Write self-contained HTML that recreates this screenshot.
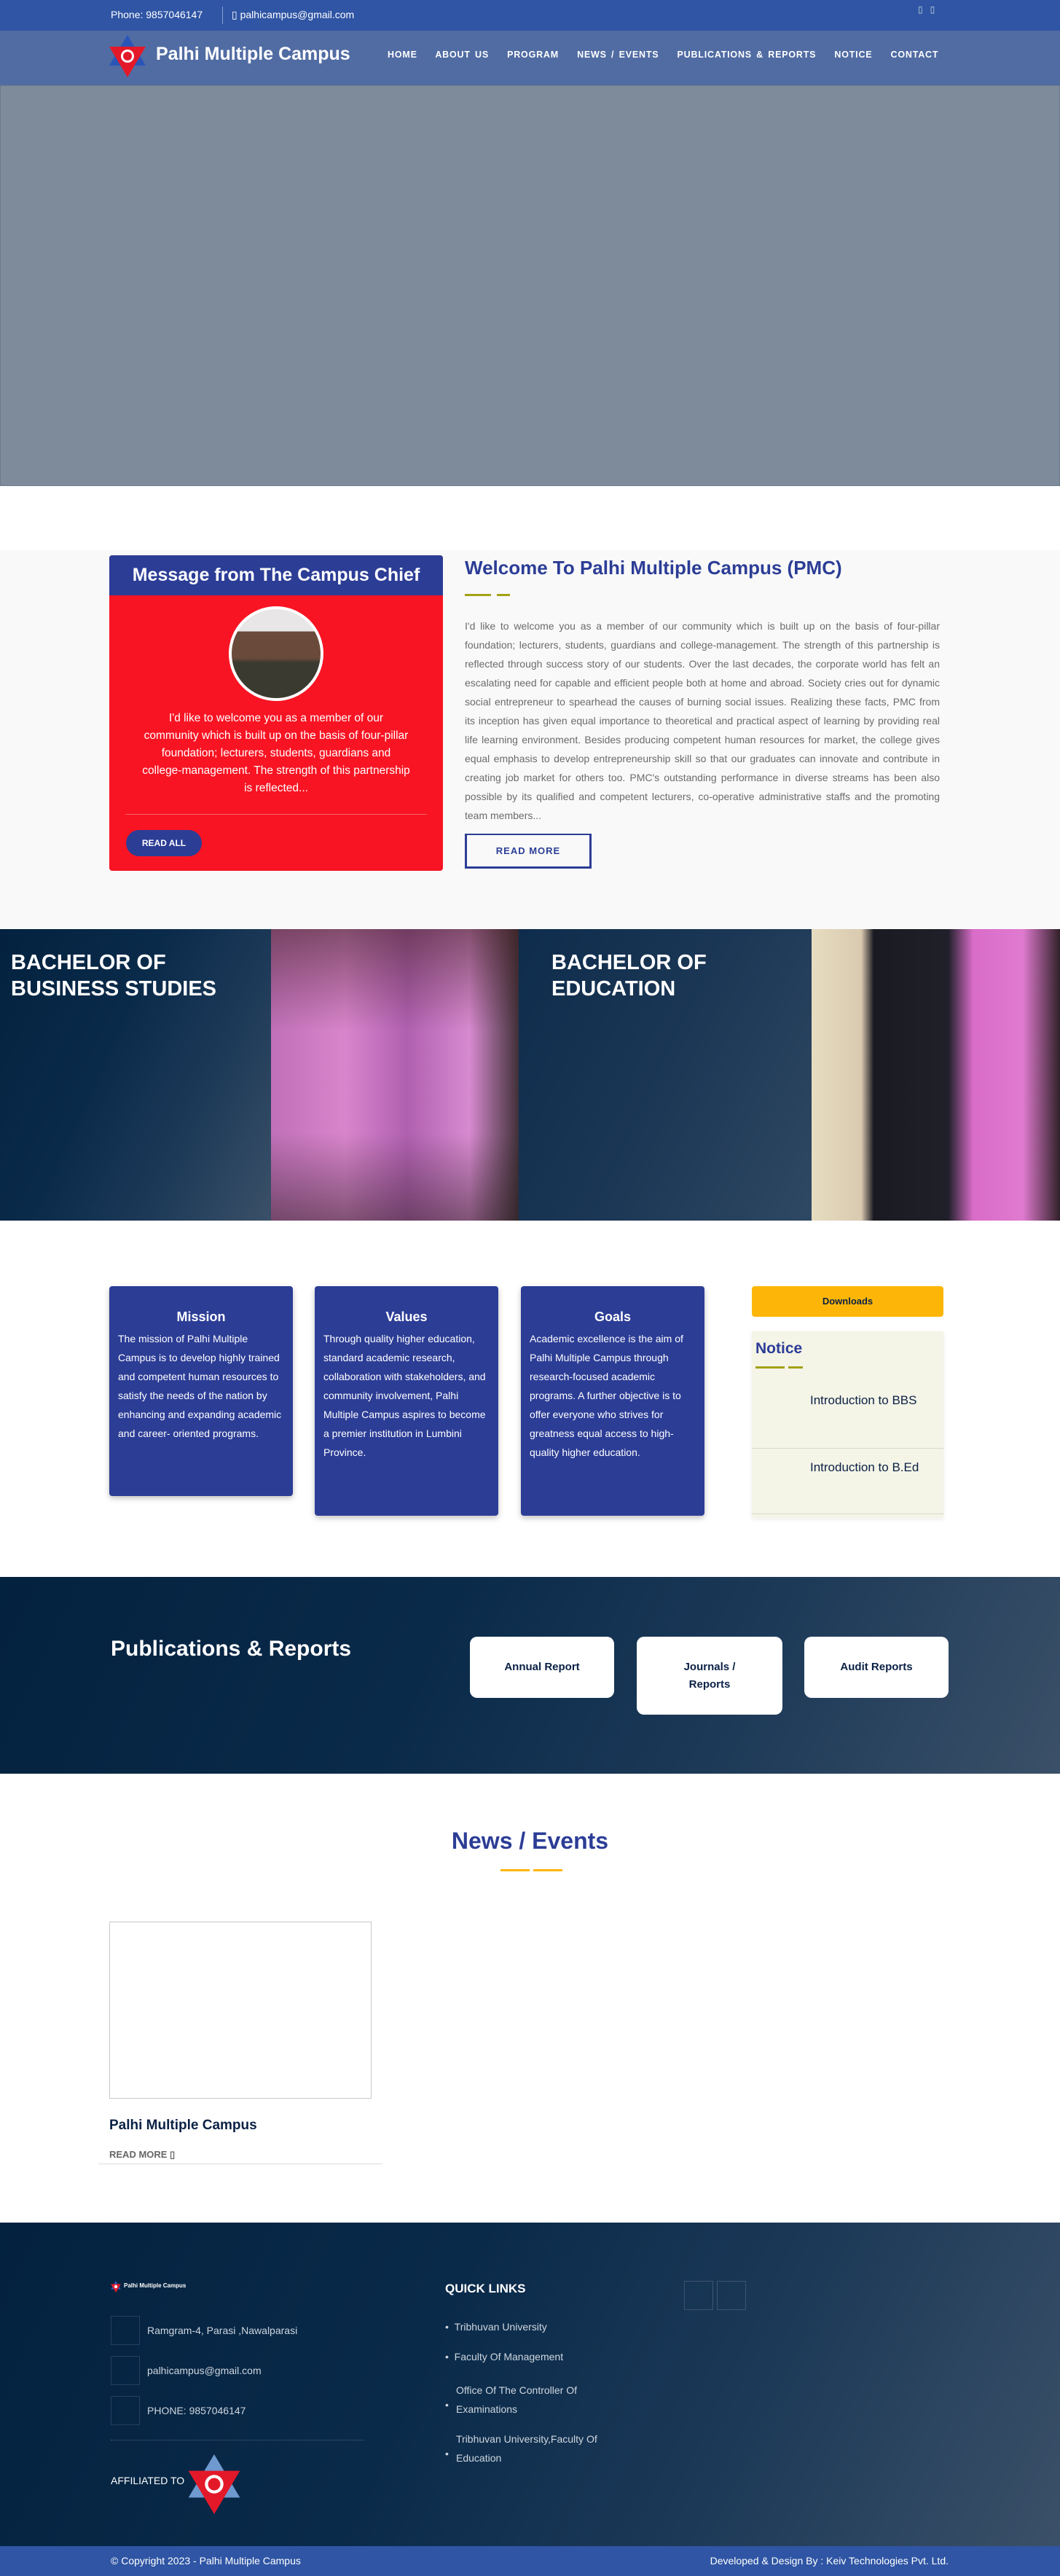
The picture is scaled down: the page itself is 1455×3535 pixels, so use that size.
<!DOCTYPE html>
<html><head><meta charset="utf-8">
<style>
*{margin:0;padding:0;box-sizing:border-box}
body{width:1455px;height:3535px;position:relative;font-family:"Liberation Sans",Arial,sans-serif;background:#fff;overflow:hidden}
.a{position:absolute}
.dark{background:linear-gradient(115deg,#03223f 0%,#0a2a4a 40%,#1d3a58 70%,#3b5068 100%)}
.card{background:#2c3d96;border-radius:4px;color:#fff;box-shadow:0 3px 8px rgba(0,0,0,.25)}
.card h3{text-align:center;font-size:18px;margin-top:32px;margin-bottom:6px}
.card p{font-size:14px;line-height:26px;padding:0 12px}
.pub{background:#fff;border-radius:10px;color:#0b2145;font-size:15px;font-weight:bold;display:flex;align-items:center;justify-content:center;text-align:center;line-height:24px}
.box{width:40px;height:40px;border:1px solid #24405e}
</style></head><body>
<!-- top bar -->
<div class="a" style="left:0;top:0;width:1455px;height:42px;background:#2f55a4"></div>
<div class="a" style="left:152px;top:12px;color:#fff;font-size:14px">Phone: 9857046147</div>
<div class="a" style="left:305px;top:9px;width:1px;height:24px;background:#8aa0cf"></div>
<div class="a" style="left:318px;top:12px;color:#fff;font-size:14px">▯ palhicampus@gmail.com</div>
<div class="a" style="left:1260px;top:6px;color:#cdd;font-size:12px">▯ &nbsp; ▯</div>
<!-- nav -->
<div class="a" style="left:0;top:42px;width:1455px;height:75px;background:#516ca3"></div>
<svg class="a" style="left:150px;top:48px" width="50" height="58" viewBox="0 0 50 58"><polygon points="25,0 50,42 0,42" fill="#2a55b8"/><polygon points="25,58 50,16 0,16" fill="#e3192a"/><circle cx="25" cy="29" r="9" fill="#fff"/><circle cx="25" cy="29" r="6" fill="#e3192a"/></svg>
<div class="a" style="left:214px;top:60px;color:#fff;font-size:25px;font-weight:bold">Palhi Multiple Campus</div>
<div class="a" style="left:532px;top:68px;color:#fff;font-size:12.5px;font-weight:bold;letter-spacing:.8px;word-spacing:2px;white-space:nowrap">HOME &nbsp;&nbsp; ABOUT US &nbsp;&nbsp; PROGRAM &nbsp;&nbsp; NEWS / EVENTS &nbsp;&nbsp; PUBLICATIONS &amp; REPORTS &nbsp;&nbsp; NOTICE &nbsp;&nbsp; CONTACT</div>
<!-- hero -->
<div class="a" style="left:0;top:117px;width:1455px;height:550px;background:#7e8b9b;border:1px solid #6d7a8a"></div>
<!-- chief section -->
<div class="a" style="left:0;top:755px;width:1455px;height:520px;background:#f9f9f9"></div>
<div class="a" style="left:150px;top:762px;width:458px;height:433px;background:#f81423;border-radius:4px;overflow:hidden">
 <div style="height:55px;background:#2c3d96;color:#fff;font-size:25px;font-weight:bold;text-align:center;line-height:55px">Message from The Campus Chief</div>
 <div class="a" style="left:164px;top:70px;width:130px;height:130px;border-radius:50%;background:#fff;padding:4px"><div style="width:100%;height:100%;border-radius:50%;background:linear-gradient(#e8e6e6 0 25%,#6a4a3a 25% 55%,#3a3a30 60%)"></div></div>
 <div class="a" style="left:45px;top:212px;width:368px;color:#fff;font-size:15.5px;line-height:24px;text-align:center">I'd like to welcome you as a member of our community which is built up on the basis of four-pillar foundation; lecturers, students, guardians and college-management. The strength of this partnership is reflected...</div>
 <div class="a" style="left:22px;top:355px;width:414px;height:1px;background:#f9646d"></div>
 <div class="a" style="left:23px;top:377px;width:104px;height:36px;border-radius:18px;background:#2c3d96;color:#fff;font-size:12px;font-weight:bold;text-align:center;line-height:36px">READ ALL</div>
</div>
<div class="a" style="left:638px;top:764px;color:#2c3d96;font-size:26px;font-weight:bold">Welcome To Palhi Multiple Campus (PMC)</div>
<div class="a" style="left:638px;top:815px;width:36px;height:3px;background:#a2a214"></div>
<div class="a" style="left:682px;top:815px;width:18px;height:3px;background:#a2a214"></div>
<div class="a" style="left:638px;top:846px;width:652px;color:#6b6b6b;font-size:14px;line-height:26px;text-align:justify">I'd like to welcome you as a member of our community which is built up on the basis of four-pillar foundation; lecturers, students, guardians and college-management. The strength of this partnership is reflected through success story of our students. Over the last decades, the corporate world has felt an escalating need for capable and efficient people both at home and abroad. Society cries out for dynamic social entrepreneur to spearhead the causes of burning social issues. Realizing these facts, PMC from its inception has given equal importance to theoretical and practical aspect of learning by providing real life learning environment. Besides producing competent human resources for market, the college gives equal emphasis to develop entrepreneurship skill so that our graduates can innovate and contribute in creating job market for others too. PMC's outstanding performance in diverse streams has been also possible by its qualified and competent lecturers, co-operative administrative staffs and the promoting team members...</div>
<div class="a" style="left:638px;top:1144px;width:174px;height:48px;border:3px solid #2c3d96;border-top-width:2px;color:#2c3d96;font-size:13px;font-weight:bold;text-align:center;line-height:44px;letter-spacing:1px">READ MORE</div>
<!-- programs -->
<div class="a dark" style="left:0;top:1275px;width:372px;height:400px"></div>
<div class="a" style="left:15px;top:1303px;color:#fff;font-size:29px;font-weight:bold;line-height:36px">BACHELOR OF<br>BUSINESS STUDIES</div>
<div class="a" style="left:372px;top:1275px;width:340px;height:400px;background:linear-gradient(90deg,#c070b8 0%,#d985cc 30%,#b060b0 55%,#d88ad0 80%,#403038 100%)"></div>
<div class="a" style="left:372px;top:1275px;width:340px;height:400px;background:linear-gradient(180deg,rgba(60,30,30,.55) 0%,rgba(0,0,0,0) 35%,rgba(0,0,0,0) 70%,rgba(40,30,30,.5) 100%)"></div>
<div class="a" style="left:712px;top:1275px;width:402px;height:400px;background:linear-gradient(115deg,#0e2c4c,#1b3755 50%,#2f4863)"></div>
<div class="a" style="left:757px;top:1303px;color:#fff;font-size:29px;font-weight:bold;line-height:36px">BACHELOR OF<br>EDUCATION</div>
<div class="a" style="left:1114px;top:1275px;width:341px;height:400px;background:linear-gradient(90deg,#e6dcc0 0%,#d9cab0 20%,#1a1a22 25%,#20202a 55%,#d96cc8 65%,#e07ad0 85%,#302028 100%)"></div>
<!-- mission -->
<div class="a card" style="left:150px;top:1765px;width:252px;height:288px"><h3>Mission</h3><p>The mission of Palhi Multiple Campus is to develop highly trained and competent human resources to satisfy the needs of the nation by enhancing and expanding academic and career- oriented programs.</p></div>
<div class="a card" style="left:432px;top:1765px;width:252px;height:315px"><h3>Values</h3><p>Through quality higher education, standard academic research, collaboration with stakeholders, and community involvement, Palhi Multiple Campus aspires to become a premier institution in Lumbini Province.</p></div>
<div class="a card" style="left:715px;top:1765px;width:252px;height:315px"><h3>Goals</h3><p>Academic excellence is the aim of Palhi Multiple Campus through research-focused academic programs. A further objective is to offer everyone who strives for greatness equal access to high-quality higher education.</p></div>
<div class="a" style="left:1032px;top:1765px;width:263px;height:42px;background:#fdb608;border-radius:4px;color:#0b2145;font-size:13px;font-weight:bold;text-align:center;line-height:42px">Downloads</div>
<div class="a" style="left:1032px;top:1827px;width:263px;height:256px;background:#f4f4e7;box-shadow:0 2px 6px rgba(0,0,0,.08)">
 <div class="a" style="left:5px;top:12px;color:#2c3d96;font-size:21px;font-weight:bold">Notice</div>
 <div class="a" style="left:5px;top:48px;width:40px;height:3px;background:#a2a214"></div>
 <div class="a" style="left:50px;top:48px;width:20px;height:3px;background:#a2a214"></div>
 <div class="a" style="left:80px;top:85px;color:#0b2145;font-size:17px">Introduction to BBS</div>
 <div class="a" style="left:0;top:160px;width:263px;height:1px;background:#d8d8cc"></div>
 <div class="a" style="left:80px;top:177px;color:#0b2145;font-size:17px">Introduction to B.Ed</div>
 <div class="a" style="left:0;top:250px;width:263px;height:1px;background:#d8d8cc"></div>
</div>
<!-- publications -->
<div class="a dark" style="left:0;top:2164px;width:1455px;height:270px"></div>
<div class="a" style="left:152px;top:2246px;color:#fff;font-size:30px;font-weight:bold">Publications &amp; Reports</div>
<div class="a pub" style="left:645px;top:2246px;width:198px;height:84px">Annual Report</div>
<div class="a pub" style="left:874px;top:2246px;width:200px;height:107px">Journals /<br>Reports</div>
<div class="a pub" style="left:1104px;top:2246px;width:198px;height:84px">Audit Reports</div>
<!-- news -->
<div class="a" style="left:0;top:2508px;width:1455px;text-align:center;color:#2c3d96;font-size:32px;font-weight:bold">News / Events</div>
<div class="a" style="left:687px;top:2565px;width:40px;height:3px;background:#fdb608"></div>
<div class="a" style="left:732px;top:2565px;width:40px;height:3px;background:#fdb608"></div>
<div class="a" style="left:150px;top:2637px;width:360px;height:243px;border:1px solid #c8c8c8"></div>
<div class="a" style="left:150px;top:2906px;color:#0b2145;font-size:19px;font-weight:bold">Palhi Multiple Campus</div>
<div class="a" style="left:150px;top:2949px;color:#666;font-size:13px;font-weight:bold">READ MORE ▯</div>
<div class="a" style="left:135px;top:2969px;width:390px;height:1px;background:#ddd"></div>
<!-- footer -->
<div class="a dark" style="left:0;top:3050px;width:1455px;height:444px"></div>
<svg class="a" style="left:152px;top:3130px" width="14" height="16" viewBox="0 0 50 58"><polygon points="25,0 50,42 0,42" fill="#2a55b8"/><polygon points="25,58 50,16 0,16" fill="#e3192a"/><circle cx="25" cy="29" r="8" fill="#fff"/></svg>
<div class="a" style="left:170px;top:3132px;color:#fff;font-size:8px;font-weight:bold">Palhi Multiple Campus</div>
<div class="a box" style="left:152px;top:3178px"></div>
<div class="a box" style="left:152px;top:3233px"></div>
<div class="a box" style="left:152px;top:3288px"></div>
<div class="a" style="left:202px;top:3190px;color:#cfd6de;font-size:14px">Ramgram-4, Parasi ,Nawalparasi</div>
<div class="a" style="left:202px;top:3245px;color:#cfd6de;font-size:14px">palhicampus@gmail.com</div>
<div class="a" style="left:202px;top:3300px;color:#cfd6de;font-size:14px">PHONE: 9857046147</div>
<div class="a" style="left:152px;top:3348px;width:348px;border-top:1px dotted #4c6078"></div>
<div class="a" style="left:152px;top:3396px;color:#fff;font-size:14px">AFFILIATED TO</div>
<svg class="a" style="left:258px;top:3368px" width="72" height="82" viewBox="0 0 50 58"><polygon points="25,0 50,42 0,42" fill="#6f9ad0"/><polygon points="25,58 50,16 0,16" fill="#e3192a"/><circle cx="25" cy="29" r="9" fill="#fff"/><circle cx="25" cy="29" r="6" fill="#e3192a"/></svg>
<div class="a" style="left:611px;top:3131px;color:#fff;font-size:17px;font-weight:bold">QUICK LINKS</div>
<div class="a" style="left:611px;top:3185px;color:#cfd6de;font-size:14px">• &nbsp;Tribhuvan University</div>
<div class="a" style="left:611px;top:3226px;color:#cfd6de;font-size:14px">• &nbsp;Faculty Of Management</div>
<div class="a" style="left:626px;top:3267px;color:#cfd6de;font-size:14px;line-height:26px">Office Of The Controller Of<br>Examinations</div>
<div class="a" style="left:626px;top:3334px;color:#cfd6de;font-size:14px;line-height:26px">Tribhuvan University,Faculty Of<br>Education</div>
<div class="a" style="left:611px;top:3292px;color:#cfd6de;font-size:14px">•</div>
<div class="a" style="left:611px;top:3359px;color:#cfd6de;font-size:14px">•</div>
<div class="a" style="left:939px;top:3130px;width:40px;height:40px;border:1px solid #3e5470"></div>
<div class="a" style="left:984px;top:3130px;width:40px;height:40px;border:1px solid #3e5470"></div>
<div class="a" style="left:0;top:3494px;width:1455px;height:41px;background:#2f55a4"></div>
<div class="a" style="left:152px;top:3506px;color:#fff;font-size:14px">© Copyright 2023 - Palhi Multiple Campus</div>
<div class="a" style="right:153px;top:3506px;color:#fff;font-size:14px">Developed &amp; Design By : Keiv Technologies Pvt. Ltd.</div>
</body></html>
